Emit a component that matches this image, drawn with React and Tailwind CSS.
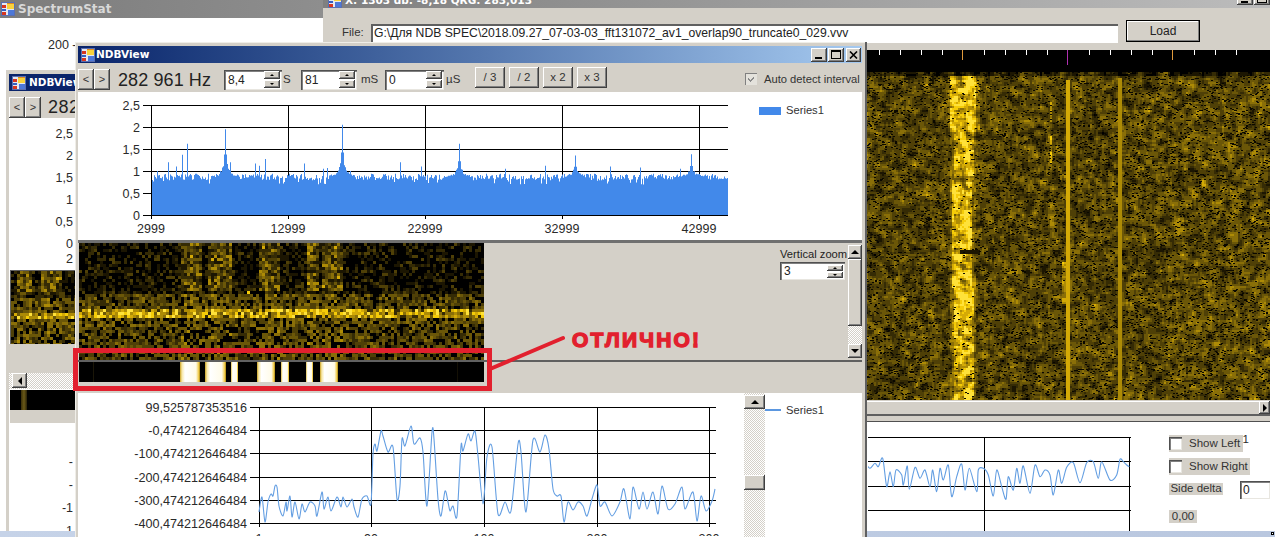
import React from "react";

const raised = "bg-[#d4d0c8] shadow-[inset_-1px_-1px_0_#404040,inset_1px_1px_0_#fff,inset_-2px_-2px_0_#808080]";
const sunken = "bg-white shadow-[inset_1px_1px_0_#505050,inset_2px_2px_0_#808080,inset_-1px_-1px_0_#e8e6e0]";
const dither = "[background:repeating-conic-gradient(#d4d0c8_0%_25%,#ffffff_0%_50%)_0_0/2px_2px]";
const ink = "#2a2a2a";

function rng(seed) {
  let a = seed >>> 0;
  return () => {
    a = (a + 0x6d2b79f5) >>> 0;
    let t = a;
    t = Math.imul(t ^ (t >>> 15), t | 1);
    t ^= t + Math.imul(t ^ (t >>> 7), t | 61);
    return ((t ^ (t >>> 14)) >>> 0) / 4294967296;
  };
}

const GOLD = ["#000000", "#1c1602", "#352b05", "#4f4007", "#6b5708", "#8a6f08", "#ad8b06", "#d4aa06", "#f5cc08", "#ffe23a"];

function heatPaths(cols, rows, cw, ch, fn) {
  const out = GOLD.map(() => []);
  for (let r = 0; r < rows; r++) {
    for (let c = 0; c < cols; c++) {
      const v = Math.max(0, Math.min(0.999, fn(c, r)));
      const i = Math.floor(v * GOLD.length);
      if (i > 0) out[i].push(`M${c * cw} ${r * ch}h${cw}v${ch}h-${cw}z`);
    }
  }
  return out.map((p) => p.join(""));
}

function Heat({ paths, width, height, dots, className = "" }) {
  return (
    <svg width={width} height={height} viewBox={`0 0 ${width} ${height}`} shapeRendering="crispEdges" className={`block shrink-0 bg-black ${className}`}>
      {paths.map((d, i) => (d ? <path key={i} d={d} fill={GOLD[i]} /> : null))}
      {dots ? <path d={dots} fill="#0a0800" /> : null}
    </svg>
  );
}

/* large waterfall */
const bigPaths = (() => {
  const cols = 202, rows = 164;
  const r = rng(11);
  const raw = [];
  for (let y = 0; y < rows; y++) {
    raw.push([]);
    for (let x = 0; x < cols; x++) raw[y].push(r());
  }
  const at = (x, y) => raw[Math.max(0, Math.min(rows - 1, y))][Math.max(0, Math.min(cols - 1, x))];
  return heatPaths(cols, rows, 2, 2, (c, rw) => {
    let n = 0;
    for (let a = -1; a <= 1; a++) for (let b = -1; b <= 1; b++) n += at(c + a, rw + b);
    n = n / 9 - 0.5;
    const px = c * 2, py = rw * 2;
    const wob = Math.sin(py / 37) * 0.8 + Math.sin(py / 11) * 0.6;
    const half = py < 60 ? 13 : 10;
    const d = Math.abs(px - 96 - wob);
    let v = 0.39 + n * 1.0 + (px > 300 ? 0.03 : 0);
    if (d < half) v += 0.38 + n * 0.8;
    else if (d < half + 3) v += 0.12;
    if (px >= 200 && px <= 202 && py > 6) v = 0.76;
    if (px >= 252 && px <= 254 && py > 4) v = 0.62;
    if (px >= 184 && px <= 185 && ((py > 28 && py < 50) || (py > 62 && py < 92))) v += 0.3;
    if (px >= 196 && px <= 198 && py > 188 && py < 232) v += 0.25;
    if (px >= 94 && px <= 112 && py >= 178 && py <= 180) v = 0.15;
    if (py < 4) v = 0.22 + n;
    return v;
  });
})();

const bigDots = (() => {
  const r = rng(77);
  let d = "";
  for (let i = 0; i < 8000; i++) {
    const x = Math.floor(r() * 404);
    const y = Math.floor(r() * 328);
    if (x >= 199 && x <= 204) continue;
    if (x >= 251 && x <= 256) continue;
    if (x >= 84 && x <= 108 && r() < 0.75) continue;
    d += `M${x} ${y}h2v1h-2z`;
  }
  return d;
})();

function smallFn(seed, colsRanges) {
  const r = rng(seed);
  return (px, py) => {
    const n = r();
    const inCol = colsRanges.some(([a, b]) => px >= a && px <= b);
    if (py < 48) {
      let v = n * n * 0.36;
      if (inCol) v += 0.16 + n * 0.2;
      return v;
    }
    if (py < 51) return px > 165 && px < 186 && n > 0.25 ? 0.7 + n * 0.2 : n * 0.35;
    if (py < 66) return n < 0.2 ? 0.05 : 0.12 + n * 0.42 + (inCol ? 0.08 : 0);
    if (py < 74) return n < 0.12 ? 0.2 : 0.4 + n * 0.58;
    if (py < 84) return n < 0.25 ? 0.08 : 0.15 + n * 0.45;
    return n < 0.3 ? 0.03 : 0.1 + n * 0.42 + (inCol ? 0.1 : 0);
  };
}

const midPaths = (() => {
  const f = smallFn(5, [[100, 122], [127, 150], [178, 200], [226, 238], [242, 262]]);
  return heatPaths(135, 39, 3, 3, (c, r) => f(c * 3, r * 3));
})();
const leftPaths = (() => {
  const f = smallFn(9, [[5, 20], [30, 50]]);
  return heatPaths(22, 25, 3, 3, (c, r) => f(c * 3, r * 3 + 26));
})();

/* bar chart data */
const barPath = (() => {
  const r = rng(3);
  const peaks = [[225, 1.95], [342, 2.05], [459, 1.62], [575, 1.35], [691, 1.38]];
  const spikes = { 168: 1.2, 176: 1.1, 182: 1.37, 187: 1.62, 230: 1.2, 255: 1.17, 259: 1.12, 265: 1.27, 304: 1.17, 400: 1.2, 421: 1.1, 157: 1.0, 323: 1.05, 327: 1.07, 350: 1.0, 505: 1.05, 545: 1.12, 610: 1.1, 640: 1.08, 680: 1.05 };
  let d = "M152 215";
  for (let x = 152; x < 728; x++) {
    let v = 0.79 + r() * 0.15;
    if (r() < 0.1) v -= 0.1;
    for (const [p, a] of peaks) {
      const dx = Math.abs(x - p);
      if (dx < 14) {
        const spike = 0.88 + (a - 0.88) * Math.exp(-dx / 1.3);
        const base = 0.84 + 0.45 * (a - 0.8) * Math.exp(-dx / 3) + r() * 0.06;
        v = Math.max(v, spike * (dx < 5 ? 1 : 0.93), base);
      }
    }
    if (spikes[x]) v = spikes[x];
    const y = (215 - v * 44).toFixed(1);
    d += `V${y}H${x + 1}`;
  }
  return d + "V215Z";
})();

function smooth(points) {
  let d = `M${points[0][0]} ${points[0][1]}`;
  for (let i = 0; i < points.length - 1; i++) {
    const p0 = points[Math.max(0, i - 1)], p1 = points[i], p2 = points[i + 1], p3 = points[Math.min(points.length - 1, i + 2)];
    const k = 0.14;
    const c1x = p1[0] + (p2[0] - p0[0]) * k, c1y = p1[1] + (p2[1] - p0[1]) * k;
    const c2x = p2[0] - (p3[0] - p1[0]) * k, c2y = p2[1] - (p3[1] - p1[1]) * k;
    d += `C${c1x.toFixed(1)} ${c1y.toFixed(1)} ${c2x.toFixed(1)} ${c2y.toFixed(1)} ${p2[0]} ${p2[1]}`;
  }
  return d;
}

const linePts = "259,513 262,498 265,523 268,503 271,495 273,497 275,487 277,488 279,507 283,517 286,503 287,512 290,497 292,518 295,503 299,520 302,505 305,513 310,503 315,507 317,517 322,493 324,510 328,498 331,512 337,498 341,508 343,498 347,508 352,500 354,508 358,518 362,500 367,497 371,505 373,455 375,445 377,452 381,432 383,437 388,453 393,448 397,500 400,487 402,440 405,447 411,427 414,445 420,439 423,453 427,507 432,433 434,440 438,500 441,517 445,492 448,503 450,512 453,507 457,517 461,447 463,452 468,435 471,442 475,432 478,457 483,505 487,458 492,448 498,515 505,503 511,512 518,445 521,453 526,513 533,441 540,453 545,436 549,450 553,490 557,497 561,497 564,523 568,503 573,511 578,503 583,507 587,517 592,500 597,486 600,507 605,503 612,517 620,503 624,490 630,520 633,488 639,510 643,493 647,510 653,493 658,515 662,487 668,510 675,505 682,488 685,510 693,493 697,522 701,497 706,512 712,502 715,490"
  .split(" ")
  .map((s) => s.split(",").map(Number));

const rightRaw = [[20,225],[30,235],[45,220],[55,230],[68,205],[80,290],[90,245],[100,290],[108,240],[125,255],[130,285],[142,228],[148,298],[165,232],[180,265],[195,240],[210,290],[218,240],[230,305],[240,235],[250,270],[265,225],[275,320],[290,260],[305,222],[315,300],[328,235],[350,305],[355,240],[370,235],[385,255],[400,318],[410,240],[425,290],[438,328],[445,260],[460,300],[470,235],[480,280],[490,228],[510,310],[525,225],[540,260],[555,240],[570,255],[580,315],[595,240],[605,280],[620,232],[640,218],[660,278],[680,218],[700,215],[715,265],[725,215],[750,270],[770,255],[780,208],[790,215],[800,225],[808,230]];
const rightPts = rightRaw.map(([x, y]) => [+(860 + x / 3).toFixed(1), +(390 + y / 3).toFixed(1)]);

function AppIcon() {
  return (
    <svg width="14" height="14" viewBox="0 0 14 14" className="shrink-0" shapeRendering="crispEdges">
      <rect x="0" y="0" width="14" height="14" fill="#5a6fb0" />
      <rect x="1" y="1" width="12" height="12" fill="#e4e8f2" />
      <rect x="6" y="1" width="7" height="6" fill="#f8d23c" />
      <rect x="6" y="1" width="7" height="1" fill="#e08a20" />
      <rect x="7" y="8" width="6" height="5" fill="#4d78d8" />
      <rect x="1" y="3" width="4" height="3" fill="#d8361f" />
      <rect x="1" y="7" width="4" height="2" fill="#3560c0" />
      <rect x="1" y="10" width="4" height="3" fill="#d8361f" />
    </svg>
  );
}

function Tri({ dir = "up", size = 3, color = "#000" }) {
  const s = size;
  const pts = { up: `0,${s} ${s},0 ${s * 2},${s}`, down: `0,0 ${s},${s} ${s * 2},0`, left: `${s},0 ${s},${s * 2} 0,${s}`, right: `0,0 0,${s * 2} ${s},${s}` }[dir];
  const horiz = dir === "left" || dir === "right";
  return (
    <svg width={horiz ? s : s * 2} height={horiz ? s * 2 : s} className="block">
      <polygon points={pts} fill={color} />
    </svg>
  );
}

function Spinner({ value, className = "", btnH = "h-[8px]" }) {
  return (
    <div className={`flex shrink-0 items-center p-[2px] ${sunken} ${className}`}>
      <span className="flex-1 pl-[2px] text-[12px] leading-none text-[#222]">{value}</span>
      <div className="flex w-[16px] flex-col gap-px">
        <div className={`flex items-center justify-center ${btnH} ${raised}`}><Tri dir="up" size={2} /></div>
        <div className={`flex items-center justify-center ${btnH} ${raised}`}><Tri dir="down" size={2} /></div>
      </div>
    </div>
  );
}

function SmallBtn({ children, className = "" }) {
  return <div className={`flex shrink-0 items-center justify-center text-[11.5px] text-[#333] ${raised} ${className}`}>{children}</div>;
}

function CaptionButtons() {
  return (
    <div className="flex gap-px">
      <SmallBtn className="h-[14px] w-[16px]"><span className="mt-[7px] -ml-[2px] block h-[2px] w-[7px] bg-black" /></SmallBtn>
      <SmallBtn className="h-[14px] w-[16px]"><span className="block h-[9px] w-[10px] border border-t-2 border-black" /></SmallBtn>
      <SmallBtn className="ml-px h-[14px] w-[15px]">
        <svg width="9" height="8" viewBox="0 0 9 8"><path d="M1 0.5 8 7.5M8 0.5 1 7.5" stroke="#000" strokeWidth="1.6" /></svg>
      </SmallBtn>
    </div>
  );
}

function Title({ children, className = "" }) {
  return <span className={`font-['DejaVu_Sans',sans-serif] font-bold whitespace-nowrap ${className}`}>{children}</span>;
}

function NavButtons({ className = "" }) {
  return (
    <div className={`flex shrink-0 ${className}`}>
      <SmallBtn className="h-[21px] w-[16px] text-[11px]">&lt;</SmallBtn>
      <SmallBtn className="h-[21px] w-[16px] text-[11px]">&gt;</SmallBtn>
    </div>
  );
}

function BarChart() {
  const ys = [105, 127, 149, 171, 193, 215];
  const yl = ["2,5", "2", "1,5", "1", "0,5", "0"];
  const xs = [151, 288, 425, 562, 699];
  const xl = ["2999", "12999", "22999", "32999", "42999"];
  return (
    <svg width="784" height="148" viewBox="78 92 784 148" className="block bg-white">
      {ys.map((y) => <line key={y} x1="143" x2="728" y1={y + 0.5} y2={y + 0.5} stroke="#000" />)}
      {xs.map((x) => <line key={x} x1={x + 0.5} x2={x + 0.5} y1="105" y2="219" stroke="#000" />)}
      <path d={barPath} fill="#4289ea" />
      <line x1="151.5" x2="151.5" y1="105" y2="216" stroke="#000" />
      <line x1="143" x2="728" y1="215.5" y2="215.5" stroke="#000" />
      <g fontSize="12.5" fill={ink}>
        {ys.map((y, i) => <text key={y} x="140" y={y + 5} textAnchor="end">{yl[i]}</text>)}
        {xs.map((x, i) => <text key={x} x={x} y="233" textAnchor="middle">{xl[i]}</text>)}
      </g>
    </svg>
  );
}

function LineChart() {
  const ys = [408, 431, 454, 478, 501, 524];
  const yl = ["99,525787353516", "-0,474212646484", "-100,474212646484", "-200,474212646484", "-300,474212646484", "-400,474212646484"];
  const xs = [259, 371, 484, 597, 709];
  const xl = ["1", "90", "100", "200", "300"];
  return (
    <svg width="666" height="143" viewBox="78 394 666 143" className="block shrink-0">
      {ys.map((y) => <line key={y} x1="250" x2="716" y1={y + 0.5} y2={y + 0.5} stroke="#000" />)}
      {xs.map((x) => <line key={x} x1={x + 0.5} x2={x + 0.5} y1="408" y2="528" stroke="#000" />)}
      <path d={smooth(linePts)} fill="none" stroke="#639ee2" strokeWidth="1.1" strokeLinejoin="round" />
      <g fontSize="12.6" fill={ink}>
        {ys.map((y, i) => <text key={y} x="247" y={y + 5} textAnchor="end">{yl[i]}</text>)}
        {xs.map((x, i) => <text key={x} x={x} y="544" textAnchor="middle">{xl[i]}</text>)}
      </g>
    </svg>
  );
}

function Ruler() {
  const ticks = [];
  for (let x = 879; x <= 1256; x += 21) ticks.push(x);
  return (
    <svg width="404" height="22" viewBox="866 50 404 22" className="block shrink-0 bg-black" shapeRendering="crispEdges">
      {ticks.map((x) => {
        const c = x === 963 || x === 1173 ? "#e09a3c" : x === 1068 ? "#b030b0" : "#ffffff";
        const h = x === 963 || x === 1173 ? 10 : x === 1068 ? 15 : 5;
        const px = x === 963 ? 962 : x === 1068 ? 1067 : x === 1173 ? 1172 : x;
        return <rect key={x} x={px} y="50" width="1" height={h} fill={c} />;
      })}
    </svg>
  );
}

function Strip() {
  const bars = [[180, 20], [205, 21], [231, 7], [257, 18], [281, 8], [306, 7], [320, 18]];
  return (
    <svg width="405" height="20" viewBox="79 361 405 20" className="block shrink-0 bg-black" shapeRendering="crispEdges">
      <defs>
        <linearGradient id="stripBar" x1="0" x2="1" y1="0" y2="0">
          <stop offset="0" stopColor="#c8a020" />
          <stop offset="0.1" stopColor="#f8e8a8" />
          <stop offset="0.25" stopColor="#ffffff" />
          <stop offset="0.8" stopColor="#fffbe8" />
          <stop offset="0.93" stopColor="#f0cc50" />
          <stop offset="1" stopColor="#a8850c" />
        </linearGradient>
      </defs>
      {bars.map(([x, w]) => <rect key={x} x={x} y="361" width={w} height="20" fill="url(#stripBar)" />)}
      <rect x="93" y="361" width="1" height="20" fill="#1a1608" />
      <rect x="457" y="361" width="1" height="20" fill="#141005" />
    </svg>
  );
}

function CheckRow({ label, w }) {
  return (
    <div className={`flex h-[17px] items-center bg-[#d4d0c8] ${w}`}>
      <span className={`h-[13px] w-[13px] shrink-0 ${sunken}`} />
      <span className="ml-[7px] text-[11.5px] leading-none whitespace-nowrap text-[#333]">{label}</span>
    </div>
  );
}

function RightPanel() {
  return (
    <div className="relative h-[109px] shrink-0 bg-white pl-[2px]">
      <svg width="402" height="109" viewBox="868 422 402 109" className="block">
        {[437, 461, 486, 510].map((y) => <line key={y} x1="868" x2="1131" y1={y + 0.5} y2={y + 0.5} stroke="#000" />)}
        {[984, 1129].map((x) => <line key={x} x1={x + 0.5} x2={x + 0.5} y1="437" y2="531" stroke="#000" />)}
        <path d={smooth(rightPts)} fill="none" stroke="#639ee2" strokeWidth="1.1" strokeLinejoin="round" />
        <text x="1210" y="443" fontSize="11.5" fill={ink}>Series1</text>
      </svg>
      <div className="absolute top-[13px] left-[303px] flex w-[101px] flex-col items-start">
        <CheckRow label="Show Left" w="w-[74px]" />
        <div className="h-[6px]" />
        <CheckRow label="Show Right" w="w-[81px]" />
        <div className="flex w-full items-start pt-[6px]">
          <span className="mt-[2px] flex h-[12px] w-[54px] items-center justify-center bg-[#d4d0c8] text-[11.5px] leading-none text-[#333]">Side delta</span>
          <span className={`ml-[17px] flex h-[18px] flex-1 items-center pl-[3px] text-[12px] text-[#222] ${sunken}`}>0</span>
        </div>
        <span className="mt-[11px] flex h-[13px] w-[28px] items-center justify-center bg-[#d4d0c8] text-[11.5px] leading-none text-[#333]">0,00</span>
      </div>
    </div>
  );
}

function BackWindow() {
  return (
    <div className="absolute top-0 left-[323px] flex h-[531px] w-[947px] flex-col overflow-hidden bg-[#d4d0c8]">
      <div className="relative h-[8px] shrink-0 overflow-hidden bg-gradient-to-r from-[#808080] to-[#bcbcbc]">
        <div className="absolute -top-[7px] left-[5px] flex items-center gap-[3px]">
          <AppIcon />
          <Title className="text-[10.5px] text-white">X: 1303 db: -8,18 QRG: 283,013</Title>
        </div>
        <div className="absolute -top-[9px] left-[914px]"><CaptionButtons /></div>
      </div>
      <div className="flex h-[42px] shrink-0 pl-[19px]">
        <span className="mt-[19px] w-[29px] text-[11.5px] leading-none text-[#333]">File:</span>
        <div className="mt-[16px] flex h-[19px] w-[747px] items-center bg-white pl-[3px] text-[12.2px] whitespace-nowrap text-[#222] shadow-[inset_0_2px_0_#606060,inset_2px_0_0_#606060,inset_-1px_-1px_0_#fff]">
          G:\Для NDB SPEC\2018.09.27_07-03-03_fft131072_av1_overlap90_truncate0_029.vvv
        </div>
        <div className="mt-[12px] ml-[8px] flex h-[22px] w-[74px] items-center justify-center bg-[#d4d0c8] text-[12px] text-[#222] shadow-[inset_0_0_0_1px_#000,inset_-2px_-2px_0_#808080,inset_2px_2px_0_#fff]">Load</div>
      </div>
      <div className="flex flex-1 flex-col pl-[543px]">
        <Ruler />
        <Heat paths={bigPaths} dots={bigDots} width={404} height={328} />
        <div className="mt-px flex h-[13px] shrink-0 justify-end bg-[#d4d0c8] shadow-[inset_0_1px_0_#fff]">
          <div className={`flex h-[13px] w-[11px] items-center justify-center ${raised}`}><Tri dir="right" size={4} /></div>
        </div>
        <div className="h-[2px] shrink-0 bg-[#606060]" />
        <div className="h-[5px] shrink-0 bg-[#d4d0c8]" />
        <div className="h-px shrink-0 bg-[#505050]" />
        <RightPanel />
      </div>
    </div>
  );
}

function LeftWindow() {
  return (
    <div className="absolute top-[70px] left-[6px] flex h-[461px] w-[70px] flex-col overflow-hidden bg-white pt-[4px] shadow-[inset_3px_0_0_#d4d0c8,inset_0_4px_0_#d4d0c8]">
      <div className="ml-[3px] flex h-[17px] shrink-0 items-center gap-[3px] bg-[#0a246a] pl-[3px]">
        <AppIcon />
        <Title className="text-[10.5px] text-white">NDBView</Title>
      </div>
      <div className="ml-[3px] flex h-[27px] shrink-0 items-end bg-[#d4d0c8]">
        <NavButtons />
        <span className="mb-[2px] ml-[7px] text-[18px] leading-none tracking-[0.5px] whitespace-nowrap text-[#222]">282</span>
      </div>
      <div className="ml-[3px] flex h-[152px] shrink-0 flex-col items-end pt-[5px] pr-[3px] text-[12.5px] leading-[22px] text-[#2a2a2a]">
        <span>2,5</span>
        <span>2</span>
        <span>1,5</span>
        <span>1</span>
        <span>0,5</span>
        <span>0</span>
        <span className="-mt-[7px]">2</span>
      </div>
      <div className="ml-[4px] border-t border-l border-[#606060]">
        <Heat paths={leftPaths} width={66} height={73} />
      </div>
      <div className="ml-[3px] h-[29px] shrink-0 bg-[#d4d0c8]" />
      <div className={`ml-[3px] flex h-[16px] shrink-0 pl-[3px] ${dither}`}>
        <div className={`flex h-[15px] w-[15px] items-center justify-center ${raised}`}><Tri dir="left" size={4} /></div>
      </div>
      <div className="mt-px ml-[4px] flex h-[20px] shrink-0 bg-black pl-[11px]">
        <span className="h-full w-[6px] bg-gradient-to-r from-[#3a2f0a] via-[#6b5a18] to-[#2a2208]" />
      </div>
      <div className="ml-[4px] h-[13px] shrink-0 bg-[#d4d0c8]" />
      <div className="ml-[3px] flex flex-1 flex-col items-end pt-[28px] pr-[3px] text-[12.5px] leading-[23px] text-[#2a2a2a]">
        <span>-</span>
        <span>-</span>
        <span>-1</span>
        <span>-1</span>
      </div>
    </div>
  );
}

function MainWindow() {
  return (
    <div className="absolute top-[42px] left-[75px] flex h-[500px] w-[792px] flex-col overflow-hidden border-r-2 border-[#606060] bg-[#d4d0c8] pt-[4px] pr-[3px] pl-[3px] shadow-[inset_1px_1px_0_#f0eee8]">
      <div className="flex h-[17px] shrink-0 items-center bg-gradient-to-r from-[#0a246a] to-[#a6caf0] pl-[3px]">
        <AppIcon />
        <Title className="ml-[1px] text-[10.5px] text-white">NDBView</Title>
        <div className="ml-auto pr-[1px]"><CaptionButtons /></div>
      </div>
      <div className="flex h-[29px] shrink-0 items-center pt-[4px]">
        <NavButtons />
        <span className="ml-[8px] w-[106px] shrink-0 text-[18px] leading-none tracking-[0.1px] whitespace-nowrap text-[#222]">282 961 Hz</span>
        <Spinner value="8,4" className="h-[20px] w-[58px]" />
        <span className="ml-px w-[18px] shrink-0 text-[11.5px] text-[#333]">S</span>
        <Spinner value="81" className="h-[20px] w-[56px]" />
        <span className="ml-[4px] w-[24px] shrink-0 text-[11.5px] text-[#333]">mS</span>
        <Spinner value="0" className="h-[20px] w-[59px]" />
        <span className="ml-[2px] w-[29px] shrink-0 text-[11.5px] text-[#333]">µS</span>
        <div className="-mt-[4px] flex shrink-0 gap-[4px]">
          {["/ 3", "/ 2", "x 2", "x 3"].map((t) => (
            <SmallBtn key={t} className="h-[21px] w-[30px]">{t}</SmallBtn>
          ))}
        </div>
        <div className="ml-[138px] flex shrink-0 items-center">
          <svg width="12" height="12" viewBox="0 0 12 12" className="shrink-0" shapeRendering="crispEdges">
            <rect width="12" height="12" fill="#808080" />
            <rect x="1" y="1" width="11" height="11" fill="#e4e2dc" />
            <path d="M3 5 5 7 9 3 9 5 5 9 3 7Z" fill="#8a8a8a" />
          </svg>
          <span className="ml-[7px] text-[11.2px] whitespace-nowrap text-[#333]">Auto detect interval</span>
        </div>
      </div>
      <div className="flex h-[148px] shrink-0 bg-white">
        <BarChart />
        <div className="absolute top-[63px] left-[684px] flex items-center gap-[5px]">
          <span className="h-[8px] w-[22px] bg-[#4289ea]" />
          <span className="text-[11.2px] leading-none text-[#333]">Series1</span>
        </div>
      </div>
      <div className="h-[3px] shrink-0 bg-[#707070]" />
      <div className="flex h-[117px] shrink-0">
        <Heat paths={midPaths} width={405} height={117} className="ml-px" />
        <div className="flex flex-1 justify-end pt-[2px]">
          <div className="mt-[2px] mr-[3px] flex w-[65px] flex-col items-start">
            <span className="text-[11.2px] leading-[14px] whitespace-nowrap text-[#222]">Vertical zoom</span>
            <Spinner value="3" className="mt-[1px] h-[18px] w-[65px]" btnH="h-[6px]" />
          </div>
          <div className="flex w-[14px] flex-col">
            <div className={`flex h-[14px] shrink-0 items-center justify-center ${raised}`}><Tri dir="up" size={4} /></div>
            <div className={`h-[67px] shrink-0 ${raised}`} />
            <div className={`h-[18px] shrink-0 ${dither}`} />
            <div className={`flex h-[14px] shrink-0 items-center justify-center ${raised}`}><Tri dir="down" size={4} /></div>
          </div>
        </div>
      </div>
      <div className="h-[2px] shrink-0 bg-[#606060]" />
      <div className="h-[31px] shrink-0 pl-px"><Strip /></div>
      <div className="flex flex-1 bg-white">
        <LineChart />
        <div className={`flex w-[21px] shrink-0 flex-col pt-[2px] ${dither}`}>
          <div className={`flex h-[14px] shrink-0 items-center justify-center ${raised}`}><Tri dir="up" size={4} /></div>
          <div className="h-[66px] shrink-0" />
          <div className={`h-[15px] shrink-0 ${raised}`} />
        </div>
        <div className="flex items-start pt-[10px]">
          <span className="mt-[6px] h-[2px] w-[16px] bg-[#5b97e0]" />
          <span className="ml-[5px] text-[11.2px] leading-[14px] text-[#333]">Series1</span>
        </div>
      </div>
    </div>
  );
}

function Callout() {
  return (
    <>
      <div className="absolute top-[348px] left-[73px] h-[43px] w-[419px] border-[5px] border-[#e2202e]" />
      <svg width="90" height="45" viewBox="485 332 90 45" className="absolute top-[332px] left-[485px]">
        <line x1="490" y1="369" x2="563" y2="338" stroke="#e2202e" strokeWidth="4" strokeLinecap="round" />
      </svg>
      <span className="absolute top-[327px] left-[572px] text-[21px] leading-[26px] font-bold tracking-[2.2px] whitespace-nowrap text-[#e2202e] [-webkit-text-stroke:1.4px_#e2202e]">ОТЛИЧНО!</span>
    </>
  );
}

export default function App() {
  return (
    <div className="relative h-[537px] w-[1275px] overflow-hidden bg-white font-['Liberation_Sans',Arial,sans-serif]">
      <div className="absolute top-0 left-0 flex h-[537px] w-[323px] flex-col bg-white">
        <div className="flex h-[18px] shrink-0 items-center gap-[3px] bg-gradient-to-r from-[#7c7c7c] to-[#8e8e8e] pl-px">
          <AppIcon />
          <Title className="text-[12px] text-[#d8d8d8]">SpectrumStat</Title>
        </div>
        <span className="pt-[21px] pl-[48px] text-[12.5px] leading-none text-[#2a2a2a]">200 -</span>
      </div>
      <BackWindow />
      <div className="absolute top-[531px] left-0 h-[6px] w-full bg-gradient-to-r from-[#c6d3e8] to-[#b9c7df]">
        <span className="absolute top-px right-[1px] block h-[3px] w-[3px] border border-black bg-white" />
      </div>
      <LeftWindow />
      <MainWindow />
      <Callout />
    </div>
  );
}
